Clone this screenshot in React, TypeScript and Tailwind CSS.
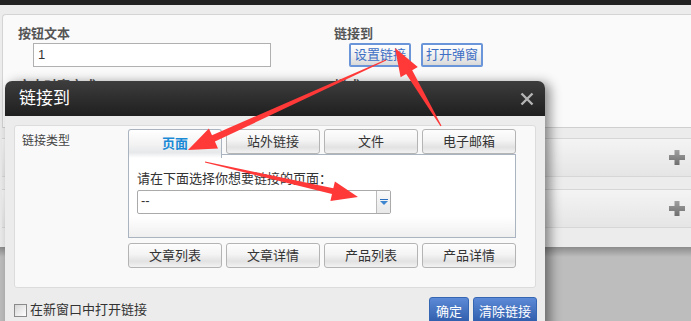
import React from "react";

type P = [number, number];
function arrowPoints(tail: P, tip: P, tailW: number, shaftW: number, headW: number, headLen: number) {
  const dx = tip[0] - tail[0];
  const dy = tip[1] - tail[1];
  const len = Math.hypot(dx, dy);
  const ux = dx / len, uy = dy / len;
  const nx = -uy, ny = ux;
  const bx = tip[0] - ux * headLen, by = tip[1] - uy * headLen;
  const pts: P[] = [
    [tail[0] + nx * tailW / 2, tail[1] + ny * tailW / 2],
    [bx + nx * shaftW / 2, by + ny * shaftW / 2],
    [bx + nx * headW / 2, by + ny * headW / 2],
    tip,
    [bx - nx * headW / 2, by - ny * headW / 2],
    [bx - nx * shaftW / 2, by - ny * shaftW / 2],
    [tail[0] - nx * tailW / 2, tail[1] - ny * tailW / 2],
  ];
  return pts.map((p) => `${p[0].toFixed(1)},${p[1].toFixed(1)}`).join(" ");
}

function Plus() {
  return (
    <svg width="16" height="15" viewBox="0 0 16 15">
      <defs>
        <linearGradient id="pg" x1="0" y1="0" x2="0" y2="1">
          <stop offset="0" stopColor="#a0a0a0" />
          <stop offset="1" stopColor="#6e6e6e" />
        </linearGradient>
      </defs>
      <path d="M5.5 0h5v5H16v5h-5.5v5h-5v-5H0V5h5.5z" fill="url(#pg)" />
    </svg>
  );
}

const tabBtn =
  "h-[25px] flex items-center justify-center rounded-[3px] border border-[#b4b4b4] bg-[linear-gradient(#fdfdfd,#f4f4f4_45%,#e2e2e2_75%,#f2f2f2)] text-[13px] text-[#333]";

export default function App() {
  return (
    <div className="relative w-[691px] h-[321px] overflow-hidden bg-[#bdbdbd] font-['Liberation_Sans','Noto_Sans_CJK_SC',sans-serif]">
      <div className="h-[5px] bg-[#222]" />
      <div className="bg-[#ececec] pt-[9px] pl-[2px]">
        {/* main white panel */}
        <div className="h-[114px] bg-[#fafafa] border-l border-t border-b border-l-[#d4d4d4] border-t-[#d4d4d4] border-b-[#cfcfcf] rounded-tl-[4px] pt-[11px] pl-[15px] flex">
          <div className="w-[316px]">
            <div className="text-[13px] font-bold text-[#555] leading-[16px]">按钮文本</div>
            <div className="ml-[15px] mt-[1px] w-[238px] h-[24px] bg-white border border-[#b0b0b0] pl-[4px] text-[13px] text-[#333] leading-[22px]">1</div>
            <div className="mt-[11px] text-[13px] font-bold text-[#555] leading-[16px]">文本对齐方式</div>
          </div>
          <div>
            <div className="text-[13px] font-bold text-[#555] leading-[16px]">链接到</div>
            <div className="ml-[15px] mt-[1px] flex gap-[10px]">
              <div className="h-[24px] w-[62px] rounded-[2px] border-2 border-[#6b95d9] bg-[linear-gradient(#ffffff,#ececec_60%,#d9d9d9)] flex items-center justify-center text-[13px] text-[#3d6fc5]">设置链接</div>
              <div className="h-[24px] w-[62px] rounded-[2px] border-2 border-[#6b95d9] bg-[linear-gradient(#ffffff,#ececec_60%,#d9d9d9)] flex items-center justify-center text-[13px] text-[#3d6fc5]">打开弹窗</div>
            </div>
            <div className="mt-[11px] text-[13px] font-bold text-[#555] leading-[16px]">样式</div>
          </div>
        </div>
        <div className="h-[10px]" />
        <div className="h-[39px] border-t border-b border-[#d6d6d6] bg-[linear-gradient(#f4f4f4,#e5e5e5)] flex items-center justify-end pr-[6px]">
          <Plus />
        </div>
        <div className="h-[12px]" />
        <div className="h-[39px] border-t border-b border-[#d6d6d6] bg-[linear-gradient(#f4f4f4,#e5e5e5)] flex items-center justify-end pr-[6px]">
          <Plus />
        </div>
        <div className="h-[19px]" />
      </div>
      <div className="h-[10px] bg-[linear-gradient(#8c8c8c,#bdbdbd)]" />

      {/* dialog */}
      <div className="absolute left-[5px] top-[81px] w-[540px] h-[250px] rounded-t-[7px] bg-[#ececec] shadow-[5px_2px_12px_rgba(0,0,0,0.45)]">
        <div className="h-[35px] rounded-t-[7px] bg-[linear-gradient(#3d3d3d,#1f1f1f)] flex items-center justify-between pl-[14px] pr-[11px]">
          <span className="text-[17px] text-white leading-none">链接到</span>
          <svg width="14" height="14" viewBox="0 0 14 14">
            <path d="M1.5 1.5L12.5 12.5M12.5 1.5L1.5 12.5" stroke="#b5b5b5" strokeWidth="2.4" />
          </svg>
        </div>
        <div className="mx-[9px] mt-[9px] h-[163px] rounded-[3px] border border-[#dcdcdc] bg-[#f9f9f9] flex">
          <div className="w-[113px] pl-[7px] pt-[8px] text-[12px] text-[#444] leading-[14px]">链接类型</div>
          <div className="w-[388px] pt-[3px]">
            <div className="grid grid-cols-4 gap-[4px] items-start">
              <div className="relative z-10 h-[29px] -mb-[4px] rounded-t-[3px] border border-b-0 border-[#aab4c0] bg-[linear-gradient(#ffffff,#f3f3f3_50%,#e6e8ea_80%,#ffffff)] flex items-start justify-center pt-[4px] text-[13px] font-bold text-[#1b8ad6]">页面</div>
              <div className={tabBtn}>站外链接</div>
              <div className={tabBtn}>文件</div>
              <div className={tabBtn}>电子邮箱</div>
            </div>
            <div className="h-[84px] border border-[#aab4c0] bg-[linear-gradient(#ffffff,#ffffff_75%,#efefef)] pl-[8px] pt-[16px]">
              <div className="text-[13px] text-[#333] leading-[16px]">请在下面选择你想要链接的页面：</div>
              <div className="mt-[3px] w-[254px] h-[24px] bg-white border border-[#aaaaaa] rounded-[2px] flex">
                <div className="flex-1 pl-[3px] text-[13px] text-[#333] leading-[20px]">--</div>
                <div className="w-[14px] border-l border-[#bbbbbb] bg-[linear-gradient(#fafafa,#e8e8e8)] flex items-center justify-center">
                  <svg width="8" height="6" viewBox="0 0 8 6">
                    <rect x="0" y="0" width="8" height="1" fill="#2d6fbf" />
                    <path d="M0 2h8L4 6z" fill="#3f86d0" />
                  </svg>
                </div>
              </div>
            </div>
            <div className="mt-[5px] grid grid-cols-4 gap-[4px]">
              <div className={tabBtn}>文章列表</div>
              <div className={tabBtn}>文章详情</div>
              <div className={tabBtn}>产品列表</div>
              <div className={tabBtn}>产品详情</div>
            </div>
          </div>
        </div>
        <div className="mt-[9px] mx-[9px] flex items-start justify-between">
          <div className="flex items-center gap-[3px] pt-[5px]">
            <div className="w-[13px] h-[13px] border border-[#8a8a8a] bg-[linear-gradient(135deg,#d6d6d6,#ffffff)]" />
            <span className="text-[13px] text-[#333] leading-[16px]">在新窗口中打开链接</span>
          </div>
          <div className="flex gap-[4px] -mr-[1px]">
            <div className="w-[40px] h-[28px] rounded-t-[3px] border border-[#3566b3] bg-[linear-gradient(#5c8ad6,#2c5aa8)] flex items-center justify-center pt-[2px] text-[13px] text-white">确定</div>
            <div className="w-[64px] h-[28px] rounded-t-[3px] border border-[#3566b3] bg-[linear-gradient(#5c8ad6,#2c5aa8)] flex items-center justify-center pt-[2px] text-[13px] text-white">清除链接</div>
          </div>
        </div>
      </div>

      {/* red arrows */}
      <svg className="absolute left-0 top-0 z-20 pointer-events-none" width="691" height="321" viewBox="0 0 691 321">
        <polygon points={arrowPoints([386, 60], [188, 150], 1.2, 7, 22, 28)} fill="#ff3838" />
        <polygon points={arrowPoints([205, 162], [358, 197], 1, 6, 20, 26)} fill="#ff3838" />
        <polygon points={arrowPoints([441, 126], [395, 48], 1.2, 7, 20, 28)} fill="#ff3838" />
      </svg>
    </div>
  );
}
